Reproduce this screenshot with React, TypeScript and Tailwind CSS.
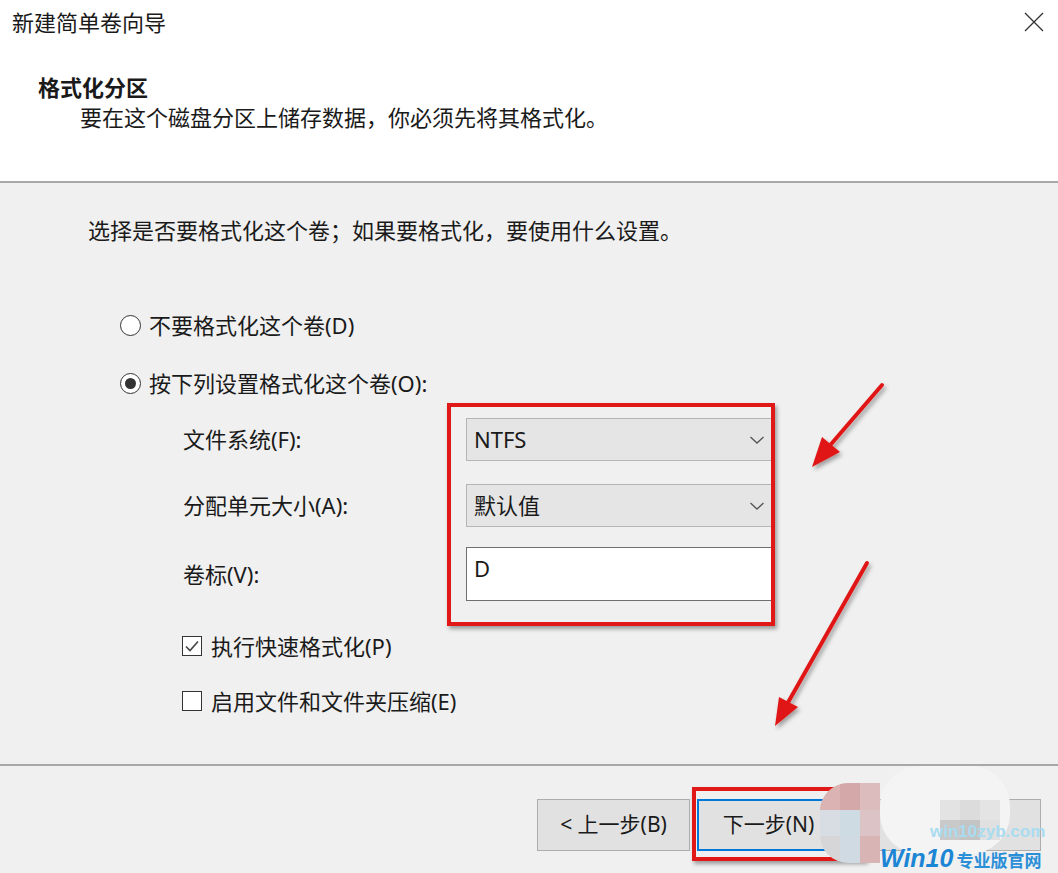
import React from "react";

const font = { fontFamily: '"Noto Sans", "Noto Sans CJK SC", sans-serif' };

function Radio({ checked }: { checked?: boolean }) {
  return (
    <span className="w-[21px] h-[21px] rounded-full border-[1.5px] border-[#333] bg-white flex items-center justify-center shrink-0">
      {checked && <span className="w-[11px] h-[11px] rounded-full bg-[#333]" />}
    </span>
  );
}

function Check({ checked }: { checked?: boolean }) {
  return (
    <span className="w-[20px] h-[20px] border-[1.5px] border-[#333] bg-white flex items-center justify-center shrink-0">
      {checked && (
        <svg width="16" height="16" viewBox="0 0 16 16">
          <path d="M2 8.5 L6 12.5 L14 3.5" fill="none" stroke="#444" strokeWidth="1.6" />
        </svg>
      )}
    </span>
  );
}

function Select({ value }: { value: string }) {
  return (
    <div className="h-[43px] bg-[#e5e5e5] border border-[#b5b5b5] border-r-0 flex items-center pl-[7px] pr-[6px]">
      <span className="flex-1 text-[22px] text-[#1a1a1a]">{value}</span>
      <svg width="16" height="10" viewBox="0 0 16 10">
        <path d="M1.5 2 L8 8 L14.5 2" fill="none" stroke="#555" strokeWidth="1.3" />
      </svg>
    </div>
  );
}

export default function App() {
  return (
    <div className="relative w-[1058px] h-[873px] overflow-hidden bg-[#f0f0f0] text-[#1a1a1a]" style={font}>
      {/* header */}
      <div className="h-[181px] bg-white">
        <div className="flex items-center justify-between pl-[12px] pr-[14px] pt-[8px]">
          <span className="text-[22px] leading-[28px]">新建简单卷向导</span>
          <svg width="20" height="20" viewBox="0 0 20 20">
            <path d="M1 1 L19 19 M19 1 L1 19" stroke="#333" strokeWidth="1.3" />
          </svg>
        </div>
        <div className="pl-[38px] mt-[37px] text-[22px] leading-[28px] font-bold">格式化分区</div>
        <div className="pl-[80px] mt-[2px] text-[22px] leading-[28px]">
          要在这个磁盘分区上储存数据，你必须先将其格式化。
        </div>
      </div>
      <div className="h-[2px] bg-[#a8a8a8]" />

      {/* body */}
      <div className="h-[581px] pt-[33px]">
        <div className="pl-[88px] text-[22px] leading-[28px]">
          选择是否要格式化这个卷；如果要格式化，要使用什么设置。
        </div>
        <div className="pl-[120px] mt-[67px] flex items-center gap-[8px] h-[28px] text-[22px]">
          <Radio />
          <span>不要格式化这个卷(D)</span>
        </div>
        <div className="pl-[120px] mt-[30px] flex items-center gap-[8px] h-[28px] text-[22px]">
          <Radio checked />
          <span>按下列设置格式化这个卷(O):</span>
        </div>

        <div className="mt-[6px] pl-[183px] flex">
          <div className="w-[264px] pt-[15px] text-[22px]">
            <div className="h-[43px] flex items-center">文件系统(F):</div>
            <div className="h-[43px] mt-[23px] flex items-center">分配单元大小(A):</div>
            <div className="h-[54px] mt-[20px] flex items-center">卷标(V):</div>
          </div>
          <div className="w-[328px] h-[223px] border-4 border-[#e01818] shadow-[2px_3px_4px_rgba(0,0,0,0.35)] pl-[15px] pt-[11px]">
            <Select value="NTFS" />
            <div className="mt-[23px]">
              <Select value="默认值" />
            </div>
            <div className="mt-[20px] h-[54px] bg-white border border-[#6f6f6f] border-r-0 pl-[7px] pt-[6px] text-[22px] leading-[28px]">
              D
            </div>
          </div>
        </div>

        <div className="pl-[182px] mt-[6px] flex items-center gap-[9px] h-[28px] text-[22px]">
          <Check checked />
          <span>执行快速格式化(P)</span>
        </div>
        <div className="pl-[182px] mt-[27px] flex items-center gap-[9px] h-[28px] text-[22px]">
          <Check />
          <span>启用文件和文件夹压缩(E)</span>
        </div>
      </div>
      <div className="h-[2px] bg-[#a8a8a8]" />

      {/* footer */}
      <div className="pt-[33px] pl-[537px] flex gap-[7px] text-[21px]">
        <button className="w-[153px] h-[52px] bg-[#e1e1e1] border border-[#adadad] flex items-center justify-center">
          &lt; 上一步(B)
        </button>
        <div className="relative">
          <button className="w-[153px] h-[52px] bg-[#e1e1e1] border-2 border-[#0078d7] flex items-center justify-center pr-[10px]">
            下一步(N)
          </button>
          <div className="absolute left-[-5px] top-[-12px] w-[174px] h-[74px] border-4 border-[#e01818] shadow-[2px_3px_4px_rgba(0,0,0,0.35)]" />
        </div>
        <button className="ml-[12px] w-[172px] h-[52px] bg-[#e1e1e1] border border-[#adadad]" />
      </div>

      {/* blurred mosaic */}
      <div className="absolute left-[820px] top-[783px] grid grid-cols-3 w-[60px] h-[80px] rounded-l-[28px] overflow-hidden">
        <div className="bg-[#dcb3b3]" />
        <div className="bg-[#d4a8a8]" />
        <div className="bg-[#dcbcbc]" />
        <div className="bg-[#d8dde3]" />
        <div className="bg-[#cfdbe3]" />
        <div className="bg-[#dcc4c6]" />
        <div className="bg-[#d6d6d8]" />
        <div className="bg-[#d0dae2]" />
        <div className="bg-[#d8b4b4]" />
      </div>
      <div className="absolute left-[880px] top-[766px] w-[130px] h-[88px] rounded-[40px] bg-[#f4f4f4]" />
      <div className="absolute left-[940px] top-[800px] grid grid-cols-3 w-[60px] h-[40px] opacity-70">
        <div className="bg-[#dcdcdc]" />
        <div className="bg-[#d2d2d2]" />
        <div className="bg-[#dedede]" />
        <div className="bg-[#b8b8b8]" />
        <div className="bg-[#b0b0b0]" />
        <div className="bg-[#d8d8d8]" />
      </div>

      {/* watermark */}
      <div className="absolute left-[930px] top-[820px] text-[17px] font-bold leading-[24px] text-[#a9dcf0]" style={{ fontFamily: '"Liberation Sans", sans-serif' }}>
        win10zyb.com
      </div>
      <div className="absolute left-[880px] top-[843px] flex items-baseline leading-[30px]">
        <span className="text-[25px] font-bold italic text-[#1c86d4]" style={{ fontFamily: '"Liberation Sans", sans-serif' }}>
          Win10
        </span>
        <span className="ml-[3px] text-[17px] font-bold text-[#2b8fd8]" style={{ fontFamily: '"Noto Sans CJK SC", sans-serif' }}>
          专业版官网
        </span>
      </div>

      {/* annotation arrows */}
      <svg className="absolute left-0 top-0 pointer-events-none" width="1058" height="873">
        <defs>
          <filter id="sh" x="-20%" y="-20%" width="140%" height="140%">
            <feDropShadow dx="2" dy="3" stdDeviation="2" floodColor="#000" floodOpacity="0.35" />
          </filter>
        </defs>
        <g filter="url(#sh)" fill="#e01818" stroke="#e01818">
          <line x1="882" y1="385" x2="826" y2="450" strokeWidth="4" strokeLinecap="round" />
          <polygon points="812,467 822,437 840,452" stroke="none" />
          <line x1="867" y1="563" x2="786" y2="706" strokeWidth="4" strokeLinecap="round" />
          <polygon points="775,726 779,697 798,707" stroke="none" />
        </g>
      </svg>
    </div>
  );
}
